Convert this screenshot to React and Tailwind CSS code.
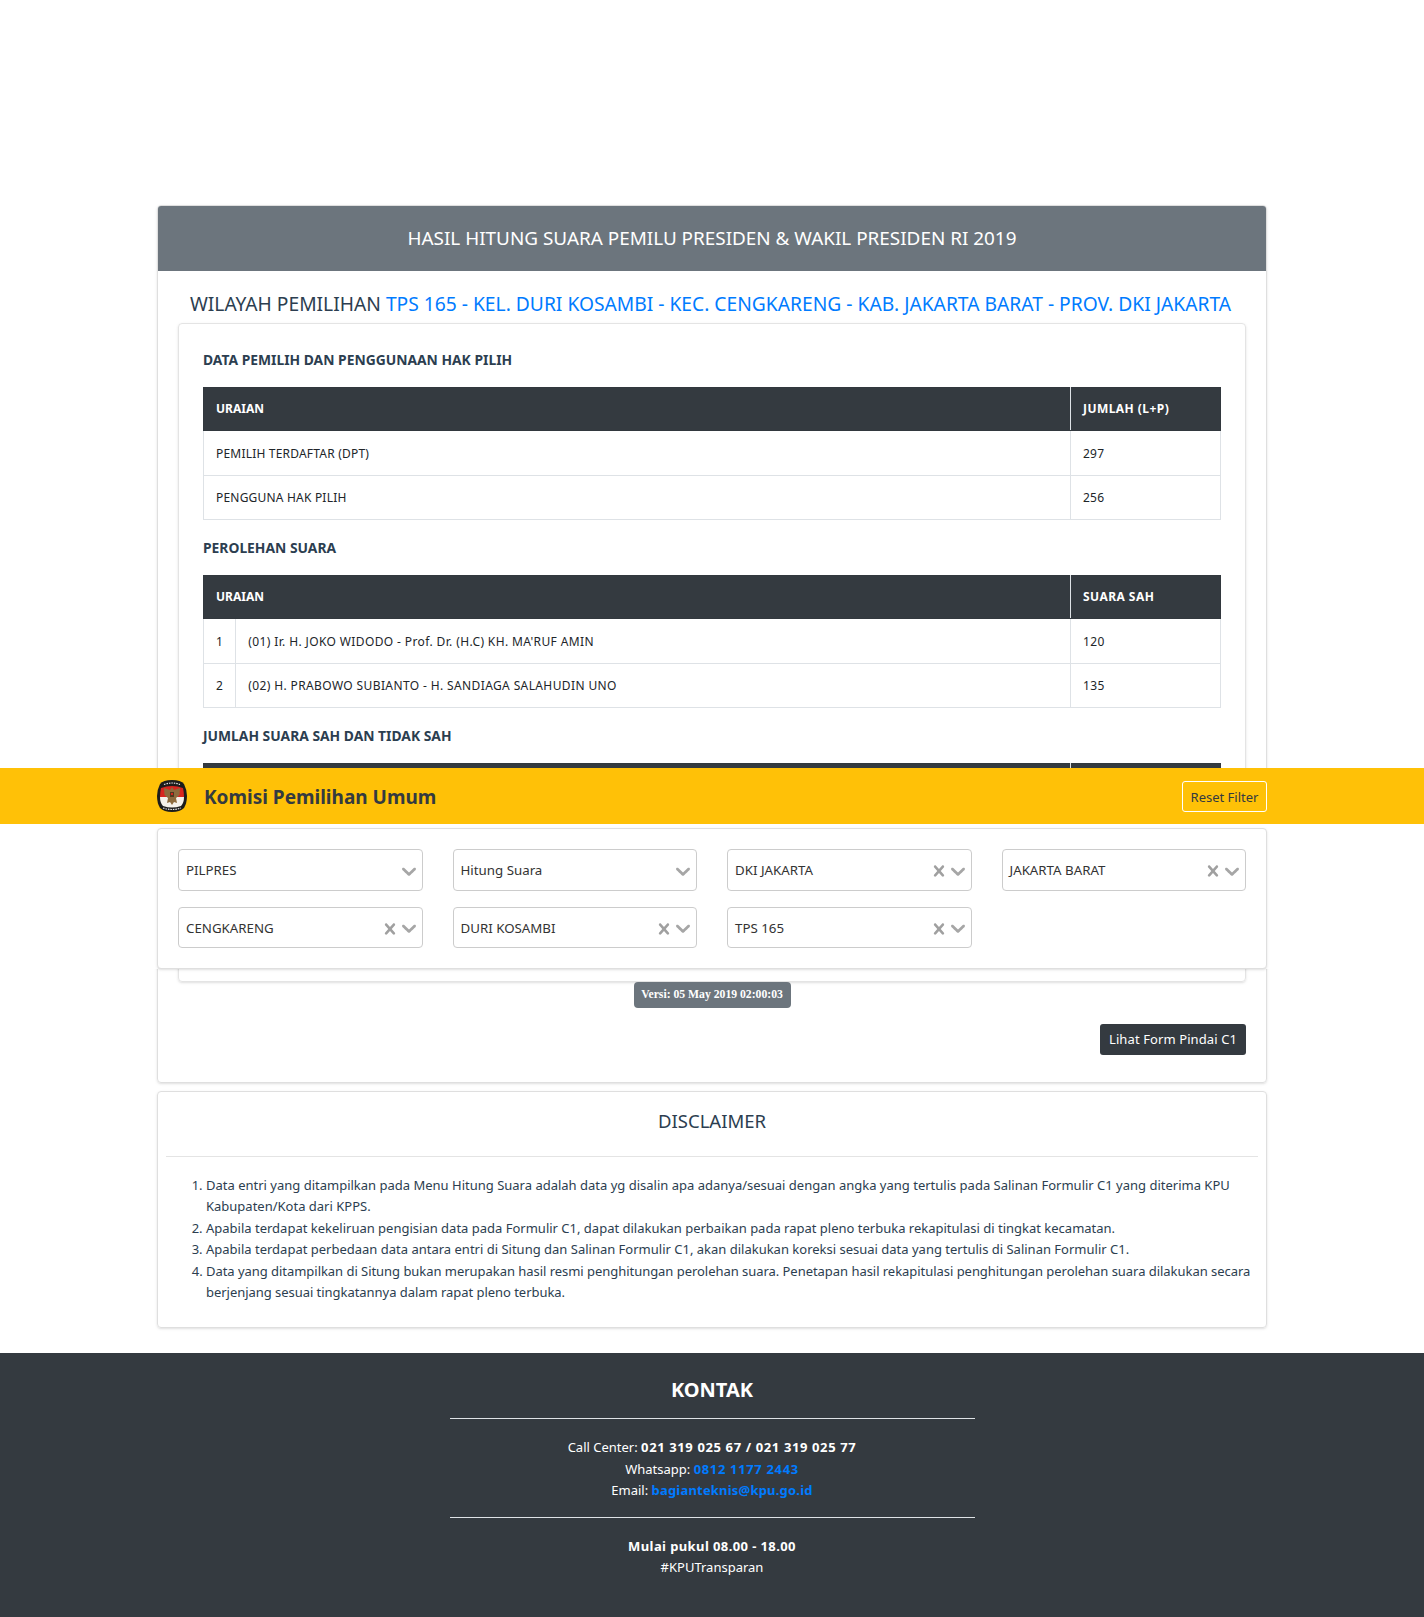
const font = { fontFamily: '"Noto Sans", "Open Sans", sans-serif' };

const chevron = "M4.516 7.548c0.436-0.446 1.043-0.481 1.576 0l3.908 3.747 3.908-3.747c0.533-0.481 1.141-0.446 1.574 0 0.436 0.445 0.408 1.197 0 1.615-0.406 0.418-4.695 4.502-4.695 4.502-0.217 0.223-0.502 0.335-0.787 0.335s-0.57-0.112-0.789-0.335c0 0-4.287-4.084-4.695-4.502s-0.436-1.17 0-1.615z";
const cross = "M14.348 14.849c-0.469 0.469-1.229 0.469-1.697 0l-2.651-3.030-2.651 3.029c-0.469 0.469-1.229 0.469-1.697 0-0.469-0.469-0.469-1.229 0-1.697l2.758-3.15-2.759-3.152c-0.469-0.469-0.469-1.228 0-1.697s1.228-0.469 1.697 0l2.652 3.031 2.651-3.031c0.469-0.469 1.228-0.469 1.697 0s0.469 1.229 0 1.697l-2.758 3.152 2.758 3.15c0.469 0.469 0.469 1.229 0 1.698z";

function Select({ label, clear, low }) {
  return (
    <div className={`flex items-center rounded-[4px] border border-[#cccccc] bg-white pl-[7px] pr-[1px] ${low ? "h-[41px]" : "h-[42px]"}`}>
      <span className="flex-1 pt-[2px] text-[13.3px] text-[#333333]">{label}</span>
      {clear && (
        <svg viewBox="0 0 20 20" className="mt-[2px] h-[22px] w-[22px] fill-[#a0a0a0]"><path d={cross} /></svg>
      )}
      <svg viewBox="0 0 20 20" className={`mt-[1px] h-[24px] w-[24px] fill-[#a6a6a6] ${clear ? "-ml-[4px]" : ""}`}><path d={chevron} /></svg>
    </div>
  );
}

function Logo() {
  return (
    <svg viewBox="0 0 30 32" className="h-[32px] w-[30px]">
      <path d="M15 0 Q24 0 27 4 Q30 10 30 16 Q30 23 27 28 Q23 32 15 32 Q7 32 3 28 Q0 23 0 16 Q0 10 3 4 Q6 0 15 0 Z" fill="#1c1c1c" />
      <path d="M4 8 Q15 4 26 8 Q27 12 27 17 L3 17 Q3 12 4 8 Z" fill="#d8261f" />
      <path d="M3 17 L27 17 Q27 23 24 26 Q15 29 6 26 Q3 23 3 17 Z" fill="#f5f1ea" />
      <path d="M15 7 L17 10 L23 8 L22.5 15 L19 18 L20 23 L17 22 L15 25 L13 22 L10 23 L11 18 L7.5 15 L7 8 L13 10 Z" fill="#8d6b3d" />
      <rect x="13" y="12" width="4" height="5" fill="#4f3a20" />
      <rect x="14" y="13" width="2" height="2" fill="#d8261f" />
      <path d="M7 4.5 Q15 1.5 23 4.5" stroke="#e8e8e8" strokeWidth="1.2" fill="none" strokeDasharray="1.5 1" />
      <path d="M6 28 Q15 31 24 28" stroke="#e8e8e8" strokeWidth="1.2" fill="none" strokeDasharray="1.5 1" />
    </svg>
  );
}

function DataTable({ head, right, rows, numbered }) {
  const cell = "border border-[#dee2e6] px-[12px] pt-[2px] align-middle";
  return (
    <table className={`mb-[16px] w-full border-collapse text-[12px] text-[#212529] ${numbered ? "tracking-[0.38px]" : "tracking-[0.2px]"}`}>
      <thead>
        <tr className="h-[43px] bg-[#343a40] text-white">
          <th colSpan={numbered ? 2 : 1} className="border border-[#32383e] border-r-[#dee2e6] px-[12px] text-left font-bold tracking-normal">{head}</th>
          <th className="w-[150px] border border-[#32383e] px-[12px] text-left font-bold tracking-[0.45px]">{right}</th>
        </tr>
      </thead>
      <tbody>
        {rows.map((r, i) => (
          <tr key={i} className="h-[44.5px]">
            {numbered && <td className={`${cell} w-[32px]`}>{i + 1}</td>}
            <td className={cell}>{r[0]}</td>
            <td className={cell}>{r[1]}</td>
          </tr>
        ))}
      </tbody>
    </table>
  );
}

function Heading({ children }) {
  return <h6 className="mb-[15px] flex h-[24px] items-center text-[13.85px] font-bold text-[#2c3e50]">{children}</h6>;
}

export default function App() {
  return (
    <div style={font} className="relative h-[1617px] overflow-hidden bg-white text-[13px] text-[#2c3e50]">
      <main className="mx-auto flex w-[1110px] flex-col gap-[8px] pt-[205px]">
        <section className="rounded-[4px] border border-[#dfdfdf] pb-[27px] shadow-sm">
          <div className="flex h-[65px] items-center justify-center rounded-t-[3px] bg-[#6c757d] text-[18.9px] text-white">
            HASIL HITUNG SUARA PEMILU PRESIDEN &amp; WAKIL PRESIDEN RI 2019
          </div>
          <h4 className="flex h-[52px] items-center justify-center pr-[3px] pt-[14px] text-[19.24px] text-[#2c3e50]">
            WILAYAH PEMILIHAN&nbsp;<span className="text-[#007bff]">TPS 165 - KEL. DURI KOSAMBI - KEC. CENGKARENG - KAB. JAKARTA BARAT - PROV. DKI JAKARTA</span>
          </h4>
          <div className="mx-[20px] rounded-[4px] border border-[#e4e4e4] px-[24px] pb-[24px] pt-[24px] shadow-sm">
            <Heading>DATA PEMILIH DAN PENGGUNAAN HAK PILIH</Heading>
            <DataTable head="URAIAN" right="JUMLAH (L+P)" rows={[["PEMILIH TERDAFTAR (DPT)", "297"], ["PENGGUNA HAK PILIH", "256"]]} />
            <Heading>PEROLEHAN SUARA</Heading>
            <DataTable numbered head="URAIAN" right="SUARA SAH" rows={[["(01) Ir. H. JOKO WIDODO - Prof. Dr. (H.C) KH. MA'RUF AMIN", "120"], ["(02) H. PRABOWO SUBIANTO - H. SANDIAGA SALAHUDIN UNO", "135"]]} />
            <Heading>JUMLAH SUARA SAH DAN TIDAK SAH</Heading>
            <DataTable head="URAIAN" right="JUMLAH" rows={[["JUMLAH SUARA SAH", "255"], ["JUMLAH SUARA TIDAK SAH", "1"], ["JUMLAH SUARA SAH DAN TIDAK SAH", "256"]]} />
          </div>
          <div className="flex justify-center">
            <span style={{ fontFamily: '"Liberation Serif", serif' }} className="flex h-[26px] w-[157px] items-center justify-center rounded-[4px] bg-[#6c757d] pt-[1px] text-[11.7px] font-bold text-white">
              Versi: 05 May 2019 02:00:03
            </span>
          </div>
          <div className="mt-[16px] flex justify-end pr-[20px]">
            <span className="flex h-[31px] w-[146px] items-center justify-center rounded-[3px] bg-[#343a40] pt-[2px] text-[13px] tracking-[0.1px] text-white">Lihat Form Pindai C1</span>
          </div>
        </section>

        <section className="h-[237px] rounded-[4px] border border-[#dfdfdf] px-[8px] shadow-sm">
          <h5 className="flex h-[65px] items-center justify-center border-b border-[#e4e4e4] pb-[6px] text-[18.5px] text-[#2c3e50]">DISCLAIMER</h5>
          <ol className="-mr-[4px] mt-[18px] list-decimal pl-[40px] text-[13px] leading-[21.6px]">
            <li>Data entri yang ditampilkan pada Menu Hitung Suara adalah data yg disalin apa adanya/sesuai dengan angka yang tertulis pada Salinan Formulir C1 yang diterima KPU Kabupaten/Kota dari KPPS.</li>
            <li>Apabila terdapat kekeliruan pengisian data pada Formulir C1, dapat dilakukan perbaikan pada rapat pleno terbuka rekapitulasi di tingkat kecamatan.</li>
            <li>Apabila terdapat perbedaan data antara entri di Situng dan Salinan Formulir C1, akan dilakukan koreksi sesuai data yang tertulis di Salinan Formulir C1.</li>
            <li className="tracking-[-0.04px]">Data yang ditampilkan di Situng bukan merupakan hasil resmi penghitungan perolehan suara. Penetapan hasil rekapitulasi penghitungan perolehan suara dilakukan secara berjenjang sesuai tingkatannya dalam rapat pleno terbuka.</li>
          </ol>
        </section>
      </main>

      <div className="absolute inset-x-0 top-[768px]">
        <header className="h-[56px] bg-[#ffc107]">
          <div className="mx-auto flex h-full w-[1110px] items-center">
            <Logo />
            <span className="ml-[17px] flex-1 pt-[2px] text-[19px] font-bold text-[#343a40]">Komisi Pemilihan Umum</span>
            <span className="flex h-[31px] w-[85px] items-center justify-center rounded-[3px] border border-white pt-[3px] text-[13px] text-[#343a40]">Reset Filter</span>
          </div>
        </header>
        <div className="bg-white pt-[4px]">
          <div className="mx-auto grid w-[1110px] grid-cols-4 gap-x-[30px] gap-y-[16px] rounded-[4px] border border-[#dfdfdf] bg-white p-[20px] shadow-sm">
            <Select label="PILPRES" />
            <Select label="Hitung Suara" />
            <Select label="DKI JAKARTA" clear />
            <Select label="JAKARTA BARAT" clear />
            <Select low label="CENGKARENG" clear />
            <Select low label="DURI KOSAMBI" clear />
            <Select low label="TPS 165" clear />
          </div>
        </div>
      </div>

      <footer className="absolute inset-x-0 top-[1353px] flex h-[264px] flex-col items-center bg-[#343a40] text-[13px] leading-[21.6px] text-white">
        <h4 className="mt-[25px] text-[20px] font-bold leading-[24px]">KONTAK</h4>
        <div className="mt-[16px] w-[525px] border-t border-[#dee2e6]" />
        <p className="mt-[18px]">Call Center: <b className="tracking-[0.62px]">021 319 025 67 / 021 319 025 77</b></p>
        <p>Whatsapp: <b className="tracking-[0.66px] text-[#007bff]">0812 1177 2443</b></p>
        <p>Email: <b className="tracking-[0.2px] text-[#007bff]">bagianteknis@kpu.go.id</b></p>
        <div className="mt-[15px] w-[525px] border-t border-[#dee2e6]" />
        <p className="mt-[18px] font-bold tracking-[0.4px]">Mulai pukul 08.00 - 18.00</p>
        <p>#KPUTransparan</p>
      </footer>
    </div>
  );
}
